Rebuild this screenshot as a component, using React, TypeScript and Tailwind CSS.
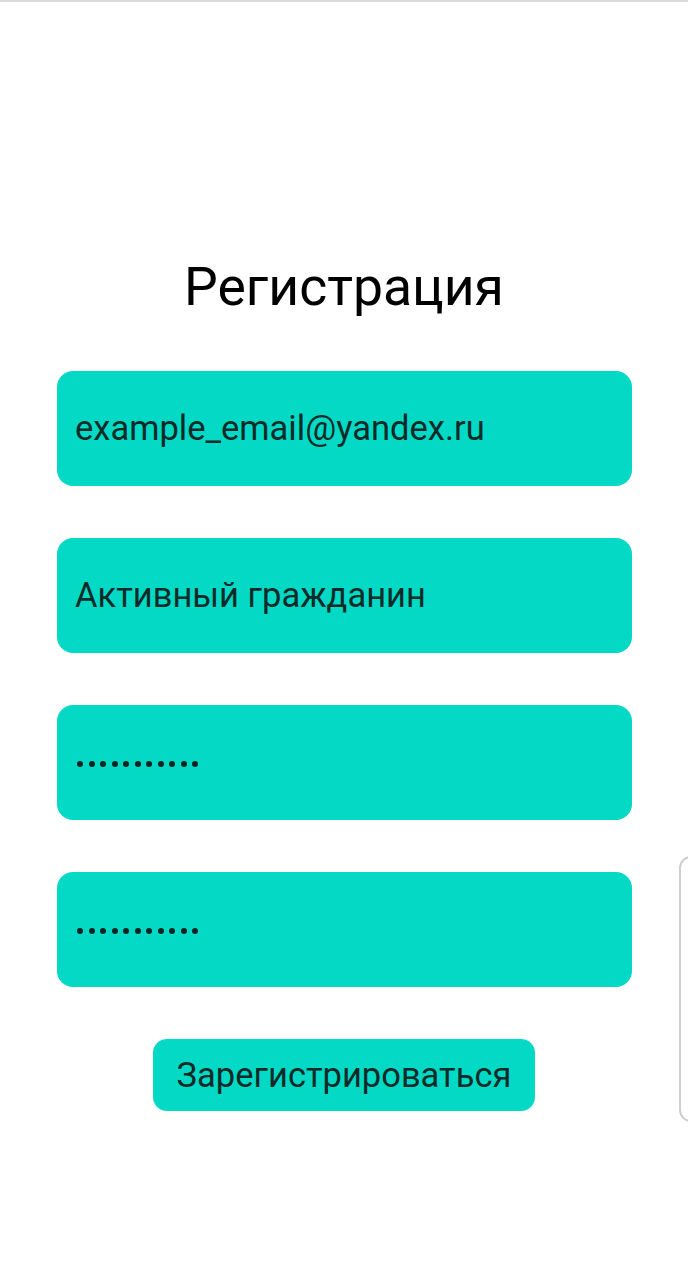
const FIELDS = [
  { kind: "text", value: "example_email@yandex.ru" },
  { kind: "text", value: "Активный гражданин" },
  { kind: "password", length: 11 },
  { kind: "password", length: 11 },
];

function Dots({ count }: { count: number }) {
  return (
    <div className="flex items-center gap-[5.5px]">
      {Array.from({ length: count }).map((_, i) => (
        <span key={i} className="block w-[6px] h-[6px] rounded-full bg-[#0a2522]" />
      ))}
    </div>
  );
}

export default function App() {
  return (
    <div className="relative w-[688px] h-[1280px] bg-white overflow-hidden font-['Roboto',sans-serif]">
      {/* status line */}
      <div className="h-[2px] bg-[#dadada]" />

      <div className="flex flex-col items-center pt-[250px]">
        <h1 className="text-[53.5px] leading-[70px] text-black font-normal">Регистрация</h1>

        <div className="mt-[49px] flex flex-col gap-[52px]">
          {FIELDS.map((f, i) => (
            <div
              key={i}
              className="w-[575px] h-[115px] ml-[1px] rounded-[16px] bg-[#04d9c6] flex items-center px-[18px]"
            >
              {f.kind === "text" ? (
                <span className="text-[34.5px] leading-none text-[#0c2b28]">{f.value}</span>
              ) : (
                <div className="pl-[2px] pt-[2px]">
                  <Dots count={f.length ?? 0} />
                </div>
              )}
            </div>
          ))}
        </div>

        <button className="mt-[52px] h-[72px] px-[24px] rounded-[14px] bg-[#04d9c6] text-[34.5px] leading-none text-[#0c2b28]">
          Зарегистрироваться
        </button>
      </div>

      {/* edge panel handle */}
      <div className="absolute left-[679px] top-[856px] w-[30px] h-[266px] rounded-[12px] border-2 border-[#cfcfcf] bg-white" />
    </div>
  );
}
